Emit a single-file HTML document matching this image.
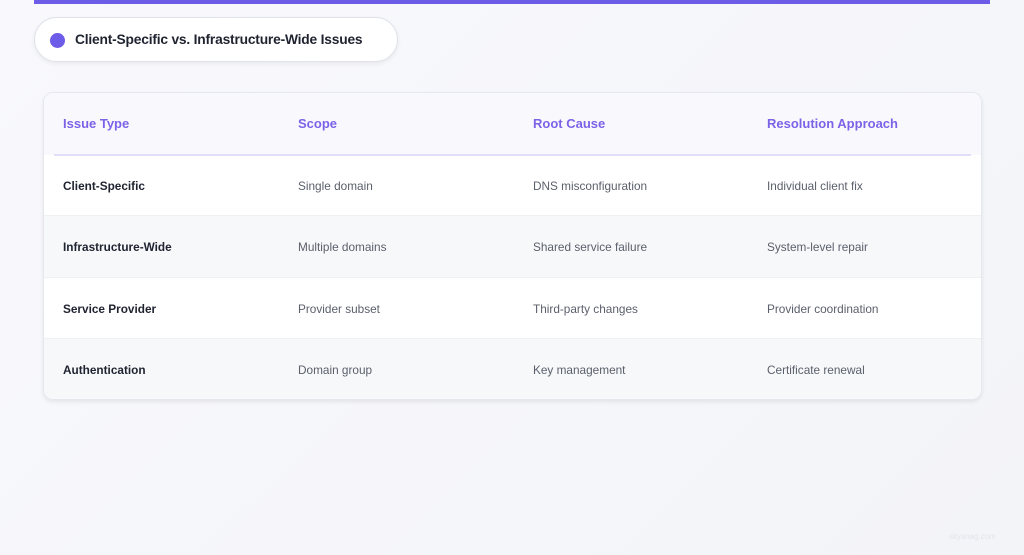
<!DOCTYPE html>
<html><head><meta charset="utf-8"><style>
*{margin:0;padding:0;box-sizing:border-box}
html,body{width:1024px;height:555px;overflow:hidden}
body{background:linear-gradient(135deg,#f9f9fd 0%,#f3f4f8 100%);font-family:"Liberation Sans",sans-serif;position:relative}
.bar{position:absolute;left:34px;top:0;width:956px;height:4px;background:#6c5ce7}
.pill{position:absolute;left:34px;top:17px;width:364px;height:45px;border-radius:23px;background:#fff;border:1.5px solid #dfe2ea;box-shadow:0 2px 5px rgba(0,0,0,.06)}
.dot{position:absolute;left:15px;top:15px;width:15px;height:15px;border-radius:50%;background:#6c5ce7}
.pill span{position:absolute;left:40px;top:14px;font-size:13.8px;font-weight:600;color:#1f2330;letter-spacing:-0.2px}
.tbl{position:absolute;left:43px;top:92px;width:939px;height:308px;border-radius:10px;background:#fff;border:1px solid #e6e8ef;box-shadow:0 2px 4px rgba(0,0,0,.08);overflow:hidden}
.row{position:absolute;left:0;width:100%;height:62px}
.hdr{top:0;background:#f9f9fd}
.line{position:absolute;left:10px;right:10px;top:61px;height:2px;background:#e2def7}
.c{position:absolute;top:0;line-height:62px;font-size:11.8px;color:#5a5f6b}
.hdr .c{color:#7d62e8;font-weight:600;font-size:13px}
.c.b{color:#1f2330;font-weight:600}
.alt{background:#f7f8fa}
.sep{border-top:1px solid #eef0f3}
.wm{position:absolute;left:949px;top:532px;font-size:8px;color:#e2e4e9}
</style></head><body>
<div class="bar"></div>
<div class="pill"><div class="dot"></div><span>Client-Specific vs. Infrastructure-Wide Issues</span></div>
<div class="tbl">
 <div class="row hdr"><div class="c" style="left:19px">Issue Type</div><div class="c" style="left:254px">Scope</div><div class="c" style="left:489px">Root Cause</div><div class="c" style="left:723px">Resolution Approach</div></div>
 <div class="line"></div>
 <div class="row" style="top:63px;height:60px"><div class="c b" style="left:19px;line-height:60px">Client-Specific</div><div class="c" style="left:254px;line-height:60px">Single domain</div><div class="c" style="left:489px;line-height:60px">DNS misconfiguration</div><div class="c" style="left:723px;line-height:60px">Individual client fix</div></div>
 <div class="row alt sep" style="top:122px"><div class="c b" style="left:19px">Infrastructure-Wide</div><div class="c" style="left:254px">Multiple domains</div><div class="c" style="left:489px">Shared service failure</div><div class="c" style="left:723px">System-level repair</div></div>
 <div class="row sep" style="top:184px"><div class="c b" style="left:19px">Service Provider</div><div class="c" style="left:254px">Provider subset</div><div class="c" style="left:489px">Third-party changes</div><div class="c" style="left:723px">Provider coordination</div></div>
 <div class="row alt sep" style="top:245px"><div class="c b" style="left:19px">Authentication</div><div class="c" style="left:254px">Domain group</div><div class="c" style="left:489px">Key management</div><div class="c" style="left:723px">Certificate renewal</div></div>
</div>
<div class="wm">skysnag.com</div>
</body></html>
